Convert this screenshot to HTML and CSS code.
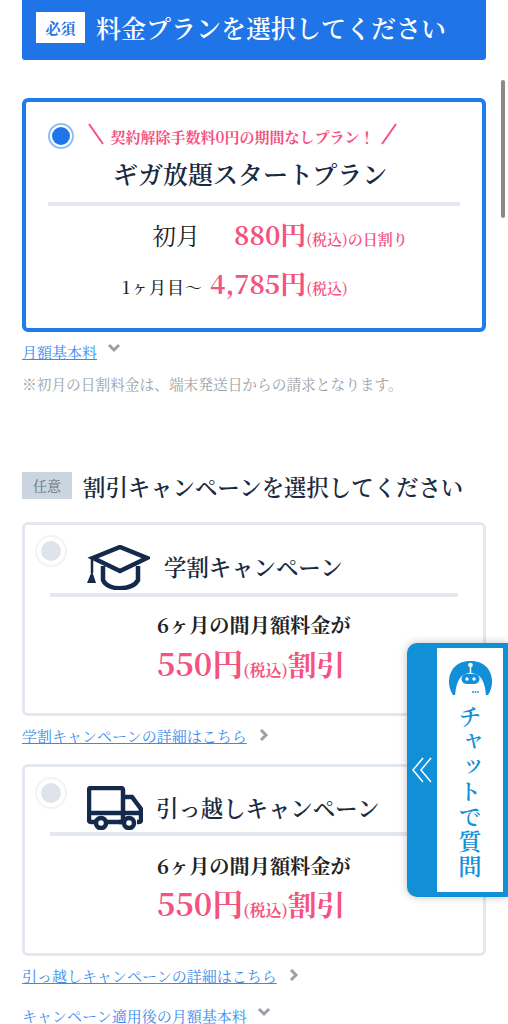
FILE: index.html
```html
<!DOCTYPE html>
<html lang="ja">
  <head>
    <meta charset="UTF-8" />
    <meta name="viewport" content="width=device-width, initial-scale=1.0" />
    <title>料金プラン</title>
    <link rel="stylesheet" href="styles.css">
  </head>
  <body>
    <div class="page">
      <div class="required-head">
        <span class="required-tag">必須</span>
        <h2>料金プランを選択してください</h2>
      </div>

      <div class="plan-card">
        <div class="plan-catch">
          <span class="radio-on"><span></span></span>
          <svg class="slash" viewBox="0 0 16 22"><path d="M1 1 L15 21" /></svg>
          <span class="catch-text">契約解除手数料0円の期間なしプラン！</span>
          <svg class="slash" viewBox="0 0 16 22"><path d="M15 1 L1 21" /></svg>
        </div>
        <div class="plan-title">ギガ放題スタートプラン</div>
        <div class="divider"></div>
        <div class="price-first">
          <span class="first-label">初月</span>
          <span class="price">880円</span><span class="tax">(税込)の日割り</span>
        </div>
        <div class="price-next">
          <span class="next-label">1ヶ月目〜</span>
          <span class="price">4,785円</span><span class="tax">(税込)</span>
        </div>
      </div>

      <div class="link-row link-first">
        <a href="#">月額基本料</a>
        <svg class="chev" viewBox="0 0 14 10"><path d="M2 2 L7 7 L12 2" /></svg>
      </div>
      <p class="note">※初月の日割料金は、端末発送日からの請求となります。</p>

      <div class="optional-head">
        <span class="optional-tag">任意</span>
        <h2>割引キャンペーンを選択してください</h2>
      </div>

      <div class="camp-card">
        <div class="camp-head">
          <span class="radio-off"><span></span></span>
          <svg class="icon-cap" viewBox="0 0 63 45">
            <path class="line" d="M33 2 L60 13 L33 26 L6 13 Z" />
            <path class="line" d="M16 21 V35 C20 46 46 46 51 35 V21" />
            <path class="line thin" d="M5 13 V28" />
            <path class="fill" d="M5 26 L9 38 H0 Z" />
          </svg>
          <span class="camp-title">学割キャンペーン</span>
        </div>
        <div class="divider camp-divider"></div>
        <div class="camp-lead">6ヶ月の間月額料金が</div>
        <div class="camp-price"><span class="big">550円</span><span class="tax-small">(税込)</span><span class="off">割引</span></div>
      </div>
      <div class="link-row link-campaign">
        <a href="#">学割キャンペーンの詳細はこちら</a>
        <svg class="chev chev-right" viewBox="0 0 10 14"><path d="M2 2 L7 7 L2 12" /></svg>
      </div>

      <div class="camp-card camp-move">
        <div class="camp-head">
          <span class="radio-off"><span></span></span>
          <svg class="icon-truck" viewBox="0 0 56 44">
            <path class="line" d="M9 36 H4 Q2 36 2 34 V4 Q2 2 4 2 H34 Q36 2 36 4 V36 H19" />
            <path class="line" d="M36 11 H45 L54 23 V34 Q54 36 52 36 H50 M32 36 H36" />
            <path class="line" d="M2 27 H54" />
            <circle class="line" cx="14" cy="37" r="5" />
            <circle class="line" cx="42" cy="37" r="5" />
          </svg>
          <span class="camp-title">引っ越しキャンペーン</span>
        </div>
        <div class="divider camp-divider"></div>
        <div class="camp-lead">6ヶ月の間月額料金が</div>
        <div class="camp-price"><span class="big">550円</span><span class="tax-small">(税込)</span><span class="off">割引</span></div>
      </div>
      <div class="link-row link-campaign">
        <a href="#">引っ越しキャンペーンの詳細はこちら</a>
        <svg class="chev chev-right" viewBox="0 0 10 14"><path d="M2 2 L7 7 L2 12" /></svg>
      </div>

      <div class="link-row link-after">
        <a href="#">キャンペーン適用後の月額基本料</a>
        <svg class="chev" viewBox="0 0 14 10"><path d="M2 2 L7 7 L12 2" /></svg>
      </div>
    </div>

    <div class="scroll-thumb"></div>

    <div class="chat">
      <svg class="chat-arrow" viewBox="0 0 20 26"><path d="M11 1 L1 13 L11 25 M19 1 L9 13 L19 25" /></svg>
      <div class="chat-panel">
        <svg class="robot" viewBox="0 0 45 36">
          <path class="dome" d="M5 35 C-3 24 0 1 22.5 1 C45 1 48 24 40 35 Z" />
          <path class="face" d="M7 36 C8 22 12 13 22.5 13 C33 13 37 22 38 36 Z" />
          <rect class="visor" x="13.5" y="14" width="18" height="10" rx="5" />
          <circle class="eye" cx="19" cy="19" r="1.7" />
          <circle class="eye" cx="26" cy="19" r="1.7" />
          <circle class="ant" cx="22.5" cy="5" r="2.3" />
          <path class="ant-line" d="M22.5 6 V13" />
          <circle class="dot" cx="25" cy="32" r="0.9" />
          <circle class="dot" cx="27.5" cy="32" r="0.9" />
          <circle class="dot" cx="30" cy="32" r="0.9" />
        </svg>
        <div class="chat-text">チャットで質問</div>
      </div>
    </div>
  </body>
</html>
```

FILE: styles.css
```css
html,
body {
  margin: 0;
  height: 1024px;
  overflow: hidden;
  background: #fff;
}

body {
  position: relative;
  font-family: "Noto Serif CJK JP", "Liberation Serif", "Noto Sans CJK JP", serif;
  color: #1a2a40;
}

h2 {
  margin: 0;
  font-weight: 600;
}

.page {
  padding: 0 22px;
}

.required-head {
  display: flex;
  align-items: center;
  gap: 11px;
  height: 60px;
  padding: 0 0 6px 14px;
  box-sizing: border-box;
  background: #1f74e8;
  border-radius: 0 0 3px 3px;
}

.required-head h2 {
  font-size: 25px;
  color: #fff;
  white-space: nowrap;
}

.required-tag {
  width: 49px;
  height: 31px;
  background: #fff;
  color: #1f74e8;
  font-size: 15px;
  font-weight: 700;
  line-height: 31px;
  text-align: center;
}

.plan-card {
  height: 234px;
  box-sizing: border-box;
  margin-top: 38px;
  padding: 21px 22px 0;
  border: 4px solid #1f7cec;
  border-radius: 6px;
}

.plan-catch {
  display: flex;
  align-items: center;
  height: 26px;
}

.radio-on {
  display: flex;
  align-items: center;
  justify-content: center;
  width: 26px;
  height: 26px;
  box-sizing: border-box;
  margin-right: 14px;
  border: 2px solid #8fc0f4;
  border-radius: 50%;
}

.radio-on span {
  width: 18px;
  height: 18px;
  border-radius: 50%;
  background: #1f74e8;
}

.slash {
  width: 16px;
  height: 22px;
  margin-top: -4px;
  fill: none;
  stroke: #f4527f;
  stroke-width: 2;
}

.catch-text {
  width: 277px;
  text-align: center;
  font-size: 15px;
  font-weight: 700;
  color: #f4527f;
  white-space: nowrap;
}

.plan-title {
  margin: 4px 0 0 65px;
  font-size: 25px;
  line-height: 40px;
  font-weight: 600;
  white-space: nowrap;
}

.divider {
  height: 4px;
  margin-top: 9px;
  background: #e3e7f0;
}

.price-first {
  display: flex;
  align-items: baseline;
  height: 50px;
  margin-top: 2px;
  padding-left: 104px;
  line-height: 52px;
}

.first-label {
  width: 82px;
  font-size: 24px;
  color: #222;
}

.price-next {
  display: flex;
  align-items: baseline;
  padding-left: 74px;
  line-height: 50px;
}

.next-label {
  width: 88px;
  font-size: 17px;
  letter-spacing: 1px;
  font-weight: 500;
  color: #222;
  white-space: nowrap;
}

.price {
  font-size: 26px;
  font-weight: 700;
  color: #f4527f;
  white-space: nowrap;
}

.tax {
  font-size: 15px;
  font-weight: 600;
  color: #f4527f;
  white-space: nowrap;
}

.link-row {
  display: flex;
  align-items: center;
  font-size: 15px;
  white-space: nowrap;
}

.link-row a {
  color: #3b8bea;
}

.link-first {
  height: 24px;
  margin-top: 7px;
}

.chev {
  width: 14px;
  height: 10px;
  margin: -6px 0 0 10px;
  fill: none;
  stroke: #9aa1a9;
  stroke-width: 3;
}

.chev-right {
  width: 10px;
  height: 14px;
  margin: 0 0 0 12px;
}

.note {
  margin: 11px 0 0;
  font-size: 14.7px;
  line-height: 20px;
  color: #9a9fa5;
  white-space: nowrap;
}

.optional-head {
  display: flex;
  align-items: center;
  gap: 11px;
  height: 27px;
  margin-top: 78px;
}

.optional-head h2 {
  font-size: 22.4px;
  white-space: nowrap;
}

.optional-tag {
  width: 50px;
  height: 27px;
  background: #cbd5e0;
  color: #67737f;
  font-size: 14px;
  line-height: 27px;
  text-align: center;
}

.camp-card {
  height: 194px;
  box-sizing: border-box;
  margin-top: 23px;
  border: 3px solid #e3e7f0;
  border-radius: 6px;
}

.camp-move {
  height: 192px;
  margin-top: 17px;
}

.camp-head {
  display: flex;
  align-items: flex-start;
  height: 68px;
  padding: 10px 0 0 10px;
  box-sizing: border-box;
}

.camp-move .camp-head {
  height: 65px;
}

.radio-off {
  display: flex;
  align-items: center;
  justify-content: center;
  width: 32px;
  height: 32px;
  box-sizing: border-box;
  border: 2px solid #f0f3f7;
  border-radius: 50%;
}

.radio-off span {
  width: 20px;
  height: 20px;
  border-radius: 50%;
  background: #dfe4ea;
}

.icon-cap {
  width: 63px;
  height: 45px;
  margin: 10px 14px 0 20px;
}

.icon-truck {
  width: 56px;
  height: 44px;
  margin: 9px 13px 0 20px;
}

.icon-cap .line,
.icon-truck .line {
  fill: none;
  stroke: #14294b;
  stroke-width: 4.5;
}

.icon-cap .thin {
  stroke-width: 2.5;
}

.icon-cap .fill {
  fill: #14294b;
}

.camp-title {
  margin-top: 12px;
  font-size: 22.4px;
  line-height: 38px;
  font-weight: 600;
  white-space: nowrap;
}

.camp-move .camp-title {
  margin-top: 11px;
}

.camp-divider {
  width: 408px;
  margin: 0 0 0 25px;
}

.camp-lead {
  margin: 14px 0 0 132px;
  font-size: 20.2px;
  line-height: 28px;
  font-weight: 700;
  color: #222;
  white-space: nowrap;
}

.camp-move .camp-lead {
  margin-top: 16px;
}

.camp-price {
  display: flex;
  align-items: baseline;
  margin: 2px 0 0 132px;
  line-height: 44px;
  color: #f4527f;
  font-weight: 700;
  white-space: nowrap;
}

.camp-move .camp-price {
  margin-top: 1px;
}

.big {
  font-size: 31px;
}

.tax-small {
  font-size: 16px;
}

.off {
  font-size: 28.5px;
}

.link-campaign {
  height: 24px;
  margin-top: 7px;
}

.link-after {
  height: 24px;
  margin-top: 16px;
}

.link-after a {
  text-decoration: none;
}

.scroll-thumb {
  position: absolute;
  top: 80px;
  left: 501px;
  width: 4px;
  height: 138px;
  border-radius: 2px;
  background: #8a8a8a;
}

.chat {
  position: absolute;
  top: 643px;
  left: 407px;
  display: flex;
  align-items: stretch;
  width: 101px;
  height: 254px;
  box-sizing: border-box;
  padding: 5px 5px 5px 0;
  background: #1190d8;
  border-radius: 10px 0 0 10px;
  box-shadow: 0 0 8px rgba(0, 0, 0, 0.25);
}

.chat-arrow {
  align-self: center;
  width: 20px;
  height: 26px;
  margin: 0 5px 0 5px;
  fill: none;
  stroke: #fff;
  stroke-width: 1.5;
}

.chat-panel {
  flex: 1;
  display: flex;
  flex-direction: column;
  align-items: center;
  padding-top: 12px;
  background: #fff;
}

.robot {
  width: 45px;
  height: 36px;
}

.robot .dome,
.robot .visor,
.robot .dot {
  fill: #1190d8;
}

.robot .face,
.robot .ant,
.robot .eye {
  fill: #fff;
}

.robot .ant-line {
  stroke: #fff;
  stroke-width: 1.5;
}

.chat-text {
  margin-top: 9px;
  writing-mode: vertical-rl;
  font-size: 23px;
  letter-spacing: 2px;
  font-weight: 600;
  color: #1190d8;
  white-space: nowrap;
}
```
